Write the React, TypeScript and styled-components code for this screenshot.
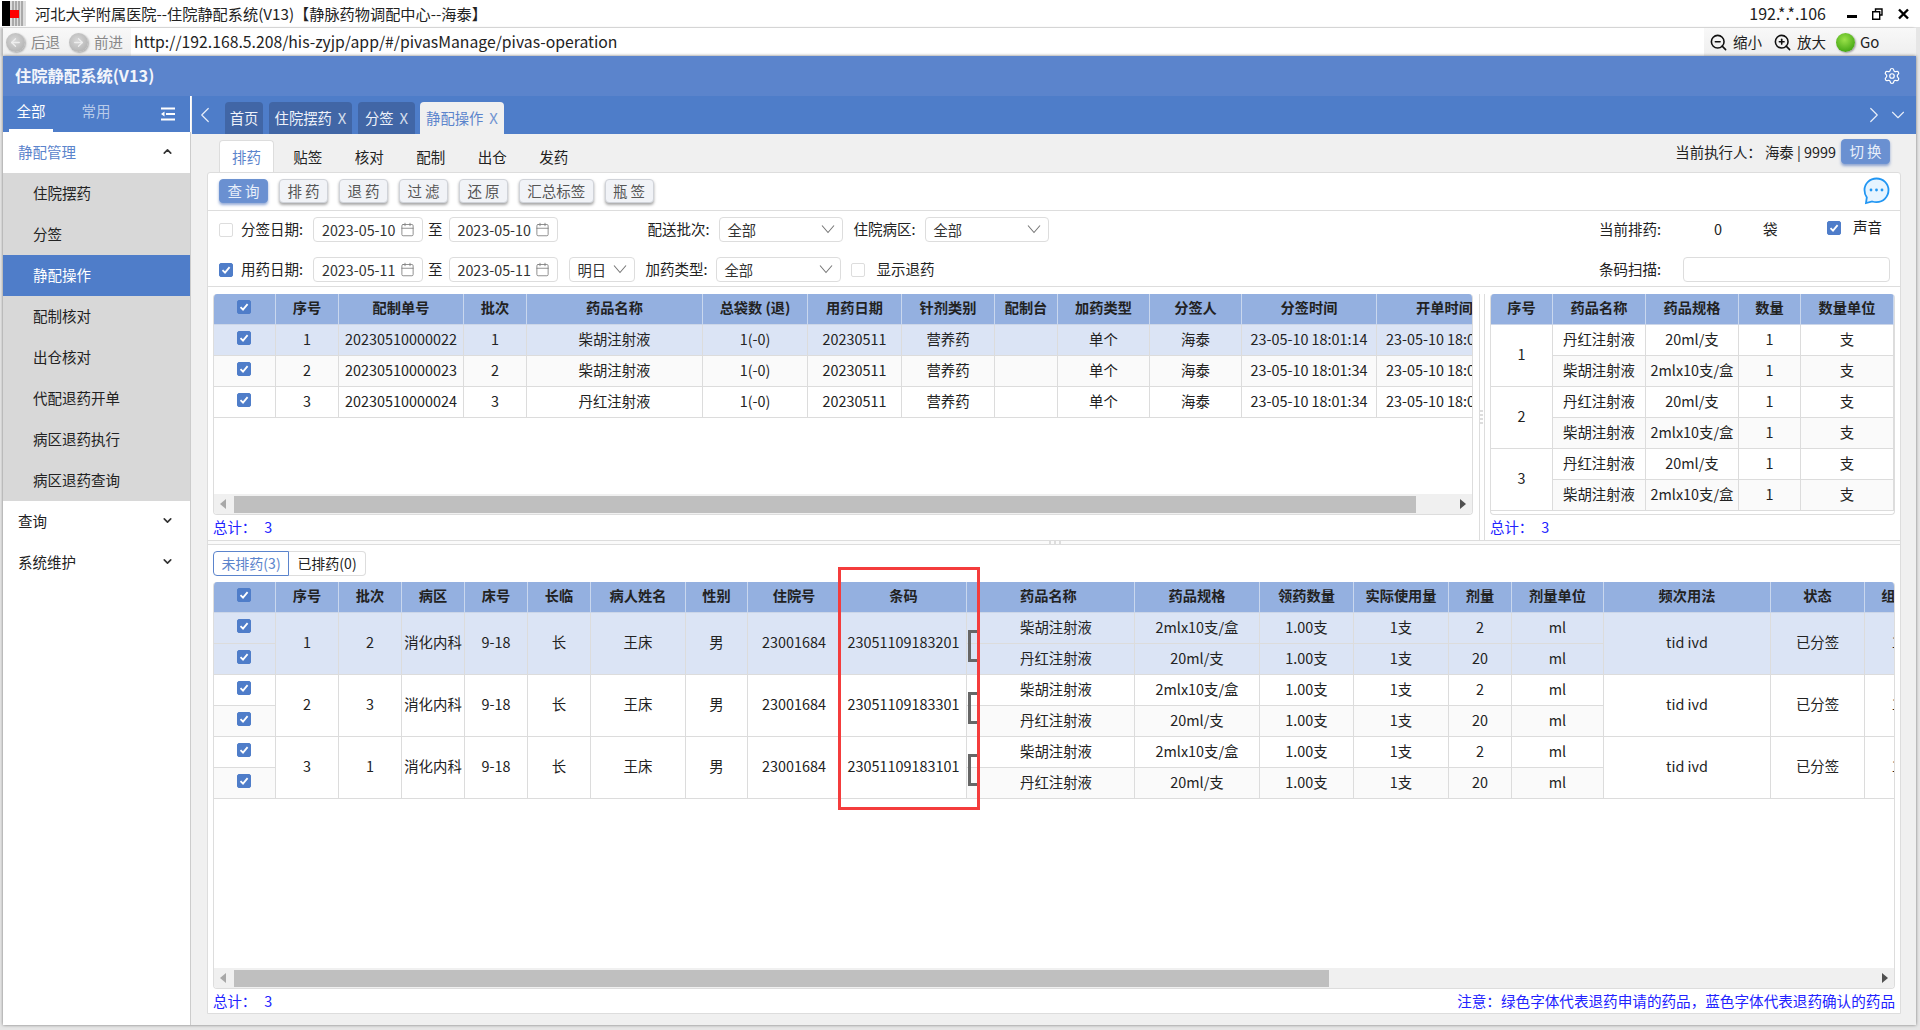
import React from 'react';
import styled, { createGlobalStyle } from 'styled-components';
import { ArrowLeft, ArrowRight, Calendar, ChevronDown, ChevronLeft, ChevronRight, ChevronUp, Settings, ZoomIn, ZoomOut } from 'lucide-react';

const Global = createGlobalStyle`
  html, body { margin: 0; padding: 0; background: #e6e6e6; }
  body { font-family: "Noto Sans CJK SC", "Liberation Sans", sans-serif; font-size: 14px; color: #222; overflow: hidden; }
  * { box-sizing: border-box; }
`;

const Page = styled.div`
  width: 1920px; height: 1030px; display: flex; flex-direction: column; overflow: hidden;
`;
const TitleBar = styled.div`
  height: 28px; flex: none; background: #fff; display: flex; align-items: center; border-bottom: 1px solid #e2e2e2;
  padding: 0 11px 0 2px; font-size: 15.2px; color: #222;
`;
const TitleText = styled.span`margin-left: 9px; white-space: nowrap; padding-bottom: 2px;`;
const TitleIp = styled.span`margin-left: auto; font-size: 16px; margin-right: 21px; padding-bottom: 2px;`;
const WinControls = styled.div`display: flex; align-items: center; gap: 15px;`;
const AddressBar = styled.div`
  height: 28px; flex: none; margin: 0 4px 0 3px; display: flex; align-items: stretch;
  background: linear-gradient(#f8f8f8, #efefef); box-shadow: -2px 0 2px #bbb; font-size: 14.5px;
`;
const NavGroup = styled.div`width: 128px; display: flex; align-items: center; padding-left: 3px; flex: none;`;
const RoundBtn = styled.span`
  width: 19px; height: 19px; border-radius: 50%; display: inline-flex; align-items: center; justify-content: center; flex: none;
  background: radial-gradient(circle at 45% 40%, #d8d8d8, #a9a9a9); box-shadow: 1px 1px 2px #aaa; color: #eee;
`;
const NavLabel = styled.span`color: #888; margin: 0 9px 2px 6px; white-space: nowrap;`;
const UrlBox = styled.div`
  flex: 1; background: #fff; display: flex; align-items: center; padding: 0 0 2px 3px; font-size: 15.75px; color: #222; white-space: nowrap;
`;
const Actions = styled.div`width: 212px; flex: none; display: flex; align-items: center; padding-left: 5px; font-size: 14.5px;`;
const ActionText = styled.span`margin: 0 11px 2px 5px; white-space: nowrap;`;
const GoDot = styled.span`
  width: 19px; height: 19px; border-radius: 50%; flex: none; margin-left: -1px; background: radial-gradient(circle at 45% 35%, #9be24a, #46a815 75%, #2f7d0c);
  box-shadow: 1px 1px 2px #999;
`;
const GoText = styled.span`margin: 0 0 2px 5px; font-size: 15px;`;

const Win = styled.div`
  flex: 1; min-height: 0; margin: 0 4px 5px 3px; display: flex; flex-direction: column; background: #f0f0f0;
  box-shadow: 0 0 3px #777;
`;
const AppHeader = styled.header`
  height: 40px; flex: none; background: #5b84cc; display: flex; align-items: center; justify-content: space-between;
  padding: 0 15px 0 12px; color: #fff;
`;
const AppTitle = styled.div`font-size: 16.3px; font-weight: 700; color: #f2f5fb; padding-bottom: 2px;`;
const Body = styled.div`flex: 1; min-height: 0; display: flex;`;

const Sidebar = styled.aside`
  width: 188px; flex: none; background: #fff; border-right: 1px solid #ccc; display: flex; flex-direction: column;
`;
const SideTabs = styled.div`
  height: 36px; flex: none; background: #4e7dc9; display: flex; align-items: center; position: relative; border-right: 1px solid #fff; margin-right: -1px;
`;
const SideTab = styled.div<{ $active?: boolean }>`
  width: ${p => (p.$active ? '44px' : '60px')}; margin-left: ${p => (p.$active ? '6px' : '13px')}; height: 36px; line-height: 30px; text-align: center;
  font-size: 14.5px; color: ${p => (p.$active ? '#fff' : '#b9cbe9')}; border-bottom: ${p => (p.$active ? '3px solid #fff' : '3px solid transparent')};
`;
const SideMenuIcon = styled.span`margin-left: auto; margin-right: 15px; display: flex;`;
const MenuHead = styled.div<{ $active?: boolean }>`
  height: 41px; flex: none; display: flex; align-items: center; justify-content: space-between; padding: 0 16px 2px 15px; font-size: 14.5px;
  color: ${p => (p.$active ? '#5b84cc' : '#222')};
`;
const MenuItem = styled.div<{ $active?: boolean }>`
  height: 41px; flex: none; display: flex; align-items: center; padding: 0 0 3px 30px; font-size: 14.5px;
  background: ${p => (p.$active ? '#4f7dc9' : '#d8d8d8')}; color: ${p => (p.$active ? '#fff' : '#222')};
`;

const Content = styled.main`flex: 1; min-width: 0; display: flex; flex-direction: column;`;
const TabsBar = styled.div`
  height: 38px; flex: none; background: #4e7dc9; display: flex; align-items: flex-end; color: #fff; margin-left: 1px; padding-right: 7px;
`;
const TabArrow = styled.span<{ $ml?: number; $auto?: boolean }>`
  align-self: center; display: flex; margin-left: ${p => (p.$auto ? 'auto' : `${p.$ml ?? 0}px`)}; color: #e8eef9;
`;
const NavTab = styled.div<{ $active?: boolean; $w: number; $ml?: number }>`
  width: ${p => p.$w}px; height: 32px; margin-left: ${p => p.$ml ?? 6}px; border-radius: 4px 4px 0 0; display: flex; align-items: center; justify-content: center; padding-bottom: 2px;
  font-size: 14.3px; background: ${p => (p.$active ? '#f0f0f0' : '#4166a6')}; color: ${p => (p.$active ? '#5b84cc' : '#eef2fa')}; white-space: nowrap;
`;
const TabX = styled.span`margin-left: 6px; opacity: .85; font-size: 15px;`;
const SubBar = styled.div`
  height: 38px; flex: none; display: flex; align-items: flex-end; padding-left: 28px; padding-right: 26px;
`;
const SubTab = styled.div<{ $active?: boolean }>`
  width: ${p => (p.$active ? '55px' : '61.5px')}; height: 32px; flex: none; display: flex; align-items: center; justify-content: center; font-size: 14.5px; padding-bottom: 1px;
  margin-right: ${p => (p.$active ? '3px' : '0')};
  color: ${p => (p.$active ? '#5b84cc' : '#222')}; background: ${p => (p.$active ? '#fff' : 'transparent')};
  border: ${p => (p.$active ? '1px solid #ddd' : '1px solid transparent')}; border-bottom: 0; border-radius: 4px 4px 0 0;
`;
const Operator = styled.div`margin-left: auto; display: flex; align-items: center; gap: 5px; height: 38px; font-size: 14.4px; padding-bottom: 3px; white-space: pre;`;
const ActionBtn = styled.button<{ $primary?: boolean; $w?: number; $h?: number }>`
  width: ${p => p.$w ?? 49}px; height: ${p => p.$h ?? 24}px; flex: none; padding: 0 0 2px; border-radius: 4px; font-family: inherit; font-size: 14.5px; white-space: pre;
  border: 1px solid ${p => (p.$primary ? '#6d93d2' : '#d0d3d9')};
  background: ${p => (p.$primary ? '#6a90d1' : '#f1f3f7')}; color: ${p => (p.$primary ? '#e8effa' : '#555')};
  box-shadow: 0 2px 3px ${p => (p.$primary ? 'rgba(60,100,180,.55)' : 'rgba(0,0,0,.35)')};
`;
const Panel = styled.section`
  flex: 1; min-height: 0; margin: 0 15px 11px 16px; background: #fff; border: 1px solid #ddd; border-radius: 3px 3px 0 0; display: flex; flex-direction: column;
`;
const Toolbar = styled.div`
  height: 38px; flex: none; border-bottom: 1px solid #ddd; display: flex; align-items: center; gap: 11px; padding: 0 10px 1px 11px;
`;
const BubbleIcon = styled.span`margin-left: auto; display: flex;`;
const Filters = styled.div`
  height: 76px; flex: none; border-bottom: 1px solid #ddd; display: flex; justify-content: space-between; padding: 6px 10px 0 11px;
`;
const FilterCol = styled.div`display: flex; flex-direction: column; gap: 15px;`;
const FilterRow = styled.div`height: 25px; display: flex; align-items: center; font-size: 14.5px; white-space: nowrap;`;
const Label = styled.span<{ $ml?: number; $w?: number }>`
  margin-left: ${p => p.$ml ?? 0}px; ${p => (p.$w ? `width:${p.$w}px;` : '')} flex: none; padding-bottom: 2px;
`;
const Raised = styled.span`display: flex; align-items: center; margin-bottom: 4px;`;
const Box = styled.div<{ $w: number; $ml?: number }>`
  width: ${p => p.$w}px; margin-left: ${p => p.$ml ?? 0}px; height: 25px; flex: none; display: flex; align-items: center; justify-content: space-between;
  border: 1px solid #ddd; border-radius: 4px; padding: 0 7px 1px 8px; background: #fff; font-size: 14.3px; color: #333;
`;
const CheckWrap = styled.span<{ $on?: boolean; $ml?: number }>`
  width: 14px; height: 14px; flex: none; display: flex; align-items: center; justify-content: center; border-radius: 2px;
  margin-left: ${p => p.$ml ?? 0}px;
  background: ${p => (p.$on ? '#4f7dc9' : '#fff')}; border: 1px solid ${p => (p.$on ? '#4f7dc9' : '#ddd')};
`;
const CheckCell = styled.div`display: flex; justify-content: center; align-items: center; padding-right: 2px;`;
const Upper = styled.div`height: 253px; flex: none; display: flex; padding-top: 7px;`;
const LeftPane = styled.div`width: 1272px; flex: none; padding-left: 5px; padding-right: 6px; border-right: 1px solid #ddd; display: flex; flex-direction: column;`;
const RightPane = styled.div`flex: 1; min-width: 0; padding: 0 5px 0 5px; border-left: 1px solid #ddd; margin-left: 4px; display: flex; flex-direction: column; position: relative;`;
const VGrip = styled.span`
  position: absolute; left: -6px; top: 116px; width: 4px; height: 16px;
  background: repeating-linear-gradient(#ddd 0 2px, transparent 2px 4px);
`;
const TableBox = styled.div<{ $h: number }>`
  height: ${p => p.$h}px; flex: none; border: 1px solid #ddd; border-top: 0; border-radius: 4px; overflow: hidden; display: flex; flex-direction: column;
`;
const TableScroll = styled.div`flex: 1; min-height: 0; overflow: hidden;`;
const Grid = styled.table<{ $w: number }>`
  width: ${p => p.$w}px; table-layout: fixed; border-collapse: separate; border-spacing: 0; font-size: 14.4px;
`;
const Th = styled.th<{ $left?: boolean }>`
  height: 31px; padding: 0 0 4px; background: #94b0e0; border-right: 1px solid #c9d7ee; border-bottom: 1px solid #ccd6e8; font-weight: 700; color: #222; font-size: 14.2px;
  white-space: nowrap; overflow: hidden;
  text-align: ${p => (p.$left ? 'left' : 'center')}; padding-left: ${p => (p.$left ? '53px' : '0')};
`;
const Td = styled.td<{ $bg?: string; $left?: boolean }>`
  height: 31px; padding: 0 0 4px; background: ${p => p.$bg ?? '#fff'}; border-right: 1px solid #dcdcdc; border-bottom: 1px solid #dcdcdc; color: #222;
  text-align: ${p => (p.$left ? 'left' : 'center')}; padding-left: ${p => (p.$left ? '53px' : '0')}; white-space: nowrap; overflow: hidden;
`;
const DrugTd = styled(Td)`position: relative; overflow: visible;`;
const Bracket = styled.span`
  position: absolute; left: 1px; top: 17px; width: 11px; height: 32px; border: 3px solid #666; border-right: 0; z-index: 1;
`;
const HScroll = styled.div`height: 20px; flex: none; background: #f0f0f0; display: flex; align-items: center; position: relative; justify-content: space-between; padding: 0 6px;`;
const Thumb = styled.div<{ $w: number }>`position: absolute; left: 20px; top: 2px; width: ${p => p.$w}px; height: 17px; background: #bfbfbf;`;
const Tri = styled.span<{ $dir: 'l' | 'r' }>`
  width: 0; height: 0; border-top: 5px solid transparent; border-bottom: 5px solid transparent;
  ${p => (p.$dir === 'l' ? 'border-right: 6px solid #a8a8a8;' : 'border-left: 6px solid #505050;')}
`;
const Total = styled.div`height: 25px; flex: none; display: flex; align-items: center; color: #2222ff; font-size: 14.4px; gap: 8px; white-space: nowrap; padding-bottom: 2px;`;
const HSplit = styled.div`
  height: 5px; flex: none; border-top: 1px solid #ddd; border-bottom: 1px solid #ddd; background: #fafafa; position: relative;
`;
const HGrip = styled.span`
  position: absolute; left: 841px; top: 0; width: 14px; height: 3px;
  background: repeating-linear-gradient(90deg, #ddd 0 2px, transparent 2px 5px);
`;
const Lower = styled.div`flex: 1; min-height: 0; padding: 6px 5px 0; display: flex; flex-direction: column; position: relative;`;
const PillRow = styled.div`height: 25px; flex: none; display: flex; margin-bottom: 6px;`;
const Pill = styled.div<{ $active?: boolean }>`
  width: ${p => (p.$active ? '76px' : '77px')}; display: flex; align-items: center; justify-content: center; font-size: 14px; padding-bottom: 1px;
  color: ${p => (p.$active ? '#5b84cc' : '#222')}; border: 1px solid ${p => (p.$active ? '#5b84cc' : '#ddd')};
  ${p => (p.$active ? 'border-radius: 4px 0 0 4px;' : 'border-radius: 0 4px 4px 0; border-left: 0;')}
`;
const Footer = styled.div`height: 25px; flex: none; display: flex; justify-content: space-between; align-items: center; color: #2222ff;`;
const Note = styled.span`font-size: 14.6px; padding-bottom: 2px; white-space: nowrap;`;
const RedFrame = styled.div`
  position: absolute; left: 630px; top: 22px; width: 142px; height: 243px; border: 3px solid #f43c3c; z-index: 3; pointer-events: none;
`;

const Check = ({ on, ml }: { on?: boolean; ml?: number }) => (
  <CheckWrap $on={on} $ml={ml}>
    {on && (
      <svg width="12" height="12" viewBox="0 0 12 12"><path d="M2.5 6.2 5 8.7 9.6 3.2" fill="none" stroke="#fff" strokeWidth="1.8" /></svg>
    )}
  </CheckWrap>
);
const CellCheck = () => <CheckCell><Check on /></CheckCell>;
const SelectChevron = () => (
  <svg width="14" height="14" viewBox="0 0 14 14"><path d="M1 3.500 7 10.500 13 3.500" fill="none" stroke="#777" strokeWidth="1.1" /></svg>
);
const DateBox = ({ v, w, ml }: { v: string; w: number; ml?: number }) => (
  <Box $w={w} $ml={ml}>{v}<Calendar size={15} strokeWidth={1.3} color="#777" /></Box>
);
const Select = ({ v, w, ml }: { v: string; w: number; ml?: number }) => (
  <Box $w={w} $ml={ml}>{v}<SelectChevron /></Box>
);

const upperCols = [62, 63, 125, 63, 176, 105, 94, 93, 63, 92, 92, 135, 136];
const upperHead = ['', '序号', '配制单号', '批次', '药品名称', '总袋数 (退)', '用药日期', '针剂类别', '配制台', '加药类型', '分签人', '分签时间', '开单时间'];
const upperRows = [
  ['1', '20230510000022', '1', '柴胡注射液', '23-05-10 18:01:14', '#dbe4f5'],
  ['2', '20230510000023', '2', '柴胡注射液', '23-05-10 18:01:34', '#fafafa'],
  ['3', '20230510000024', '3', '丹红注射液', '23-05-10 18:01:34', '#fff'],
];
const sideCols = [62, 93, 93, 62, 93];
const lowerCols = [62, 63, 63, 63, 63, 63, 95, 62, 93, 126, 168, 125, 94, 95, 63, 92, 167, 94, 62];
const lowerHead = ['序号', '批次', '病区', '床号', '长临', '病人姓名', '性别', '住院号', '条码'];
const lowerRows = [
  { n: '1', b: '2', code: '23051109183201', sel: true },
  { n: '2', b: '3', code: '23051109183301', sel: false },
  { n: '3', b: '1', code: '23051109183101', sel: false },
];
const drugs = [
  ['柴胡注射液', '2mlx10支/盒', '2'],
  ['丹红注射液', '20ml/支', '20'],
];

export default function App() {
  return (
    <Page>
      <Global />
      <TitleBar>
        <svg width="24" height="25" viewBox="0 0 24 25">
          <rect width="8" height="25" fill="#000" />
          <rect x="8" width="16" height="25" fill="#ddd" />
          <path d="M11 0v25M14 0v25M17 0v25M20 0v25" stroke="#888" strokeWidth="1.2" />
          <rect x="8" y="9" width="9" height="8" fill="#f00" />
        </svg>
        <TitleText>河北大学附属医院--住院静配系统(V13)【静脉药物调配中心--海泰】</TitleText>
        <TitleIp>192.*.*.106</TitleIp>
        <WinControls>
          <svg width="10" height="12" viewBox="0 0 10 12"><rect y="7" width="10" height="3" fill="#000" /></svg>
          <svg width="11" height="12" viewBox="0 0 11 12"><path d="M3.5 3V1h6.5v6H8M.7 3.7h7v7.5h-7z" fill="none" stroke="#000" strokeWidth="1.4" /></svg>
          <svg width="11" height="12" viewBox="0 0 11 12"><path d="M1 1.5 10 10.5M10 1.5 1 10.5" stroke="#000" strokeWidth="2.4" /></svg>
        </WinControls>
      </TitleBar>
      <AddressBar>
        <NavGroup>
          <RoundBtn><ArrowLeft size={13} strokeWidth={2.4} /></RoundBtn><NavLabel>后退</NavLabel>
          <RoundBtn><ArrowRight size={13} strokeWidth={2.4} /></RoundBtn><NavLabel>前进</NavLabel>
        </NavGroup>
        <UrlBox>http://192.168.5.208/his-zyjp/app/#/pivasManage/pivas-operation</UrlBox>
        <Actions>
          <ZoomOut size={19} strokeWidth={2} color="#111" /><ActionText>缩小</ActionText>
          <ZoomIn size={19} strokeWidth={2} color="#111" /><ActionText>放大</ActionText>
          <GoDot /><GoText>Go</GoText>
        </Actions>
      </AddressBar>
      <Win>
        <AppHeader>
          <AppTitle>住院静配系统(V13)</AppTitle>
          <Settings size={18} strokeWidth={1.6} color="#fff" />
        </AppHeader>
        <Body>
          <Sidebar>
            <SideTabs>
              <SideTab $active>全部</SideTab>
              <SideTab>常用</SideTab>
              <SideMenuIcon>
                <svg width="14" height="14" viewBox="0 0 14 14"><path d="M0 1.5h14M5 7h9M0 12.500h14" stroke="#fff" strokeWidth="2" /><path d="M0 7 3.500 4.500v5z" fill="#fff" /></svg>
              </SideMenuIcon>
            </SideTabs>
            <MenuHead $active>静配管理<ChevronUp size={13} strokeWidth={3} color="#333" /></MenuHead>
            <MenuItem>住院摆药</MenuItem>
            <MenuItem>分签</MenuItem>
            <MenuItem $active>静配操作</MenuItem>
            <MenuItem>配制核对</MenuItem>
            <MenuItem>出仓核对</MenuItem>
            <MenuItem>代配退药开单</MenuItem>
            <MenuItem>病区退药执行</MenuItem>
            <MenuItem>病区退药查询</MenuItem>
            <MenuHead>查询<ChevronDown size={13} strokeWidth={3} color="#333" /></MenuHead>
            <MenuHead>系统维护<ChevronDown size={13} strokeWidth={3} color="#333" /></MenuHead>
          </Sidebar>
          <Content>
            <TabsBar>
              <TabArrow><ChevronLeft size={26} strokeWidth={1.1} /></TabArrow>
              <NavTab $w={38} $ml={7}>首页</NavTab>
              <NavTab $w={83}>住院摆药<TabX>X</TabX></NavTab>
              <NavTab $w={57}>分签<TabX>X</TabX></NavTab>
              <NavTab $w={84} $active $ml={5}>静配操作<TabX>X</TabX></NavTab>
              <TabArrow $auto><ChevronRight size={26} strokeWidth={1.1} /></TabArrow>
              <TabArrow><ChevronDown size={22} strokeWidth={1.2} /></TabArrow>
            </TabsBar>
            <SubBar>
              <SubTab $active>排药</SubTab>
              <SubTab>贴签</SubTab>
              <SubTab>核对</SubTab>
              <SubTab>配制</SubTab>
              <SubTab>出仓</SubTab>
              <SubTab>发药</SubTab>
              <Operator>
                当前执行人： 海泰 | 9999
                <ActionBtn $primary $h={25}>切 换</ActionBtn>
              </Operator>
            </SubBar>
            <Panel>
              <Toolbar>
                <ActionBtn $primary>查 询</ActionBtn>
                <ActionBtn>排 药</ActionBtn>
                <ActionBtn>退 药</ActionBtn>
                <ActionBtn>过 滤</ActionBtn>
                <ActionBtn>还 原</ActionBtn>
                <ActionBtn $w={74.500}>汇总标签</ActionBtn>
                <ActionBtn>瓶 签</ActionBtn>
                <BubbleIcon>
                  <svg width="27" height="28" viewBox="0 0 27 28">
                    <path d="M13.500 1.500C6.700 1.500 1.500 6.600 1.500 13c0 3 .8 5.600 2.300 7.400L3 26l6.200-1.500c1.400.4 2.800.6 4.300.6 6.800 0 12-5.400 12-12S20.300 1.500 13.500 1.500z" fill="#e6f4ff" stroke="#2196f3" strokeWidth="1.800" />
                    <circle cx="8" cy="13" r="1.400" fill="#2196f3" /><circle cx="13.500" cy="13" r="1.400" fill="#2196f3" /><circle cx="19" cy="13" r="1.400" fill="#2196f3" />
                  </svg>
                </BubbleIcon>
              </Toolbar>
              <Filters>
                <FilterCol>
                  <FilterRow>
                    <Check />
                    <Label $ml={8} $w={72}>分签日期:</Label>
                    <DateBox v="2023-05-10" w={110} />
                    <Label $ml={5}>至</Label>
                    <DateBox v="2023-05-10" w={109} ml={6} />
                    <Label $ml={90}>配送批次:</Label>
                    <Select v="全部" w={124} ml={9} />
                    <Label $ml={11}>住院病区:</Label>
                    <Select v="全部" w={124} ml={9} />
                  </FilterRow>
                  <FilterRow>
                    <Check on />
                    <Label $ml={8} $w={72}>用药日期:</Label>
                    <DateBox v="2023-05-11" w={110} />
                    <Label $ml={5}>至</Label>
                    <DateBox v="2023-05-11" w={109} ml={6} />
                    <Select v="明日" w={66} ml={11} />
                    <Label $ml={11}>加药类型:</Label>
                    <Select v="全部" w={125} ml={8} />
                    <Check ml={10} />
                    <Label $ml={12}>显示退药</Label>
                  </FilterRow>
                </FilterCol>
                <FilterCol>
                  <FilterRow>
                    <Label $w={115}>当前排药:</Label>
                    <Label $w={49}>0</Label>
                    <Label $w={64}>袋</Label>
                    <Raised>
                      <Check on />
                      <Label $ml={12}>声音</Label>
                    </Raised>
                  </FilterRow>
                  <FilterRow>
                    <Label $w={84}>条码扫描:</Label>
                    <Box $w={207} />
                  </FilterRow>
                </FilterCol>
              </Filters>
              <Upper>
                <LeftPane>
                  <TableBox $h={221}>
                    <TableScroll>
                      <Grid $w={1299}>
                        <colgroup>{upperCols.map((w, i) => <col key={i} width={w} />)}</colgroup>
                        <thead>
                          <tr>
                            {upperHead.map((h, i) => <Th key={i}>{i === 0 ? <CellCheck /> : h}</Th>)}
                          </tr>
                        </thead>
                        <tbody>
                          {upperRows.map(r => (
                            <tr key={r[0]}>
                              <Td $bg={r[5]}><CellCheck /></Td>
                              <Td $bg={r[5]}>{r[0]}</Td>
                              <Td $bg={r[5]}>{r[1]}</Td>
                              <Td $bg={r[5]}>{r[2]}</Td>
                              <Td $bg={r[5]}>{r[3]}</Td>
                              <Td $bg={r[5]}>1(-0)</Td>
                              <Td $bg={r[5]}>20230511</Td>
                              <Td $bg={r[5]}>营养药</Td>
                              <Td $bg={r[5]} />
                              <Td $bg={r[5]}>单个</Td>
                              <Td $bg={r[5]}>海泰</Td>
                              <Td $bg={r[5]}>{r[4]}</Td>
                              <Td $bg={r[5]}>{r[4]}</Td>
                            </tr>
                          ))}
                        </tbody>
                      </Grid>
                    </TableScroll>
                    <HScroll><Tri $dir="l" /><Thumb $w={1182} /><Tri $dir="r" /></HScroll>
                  </TableBox>
                  <Total>总计：<span>3</span></Total>
                </LeftPane>
                <RightPane>
                  <VGrip />
                  <TableBox $h={221}>
                    <TableScroll>
                      <Grid $w={403}>
                        <colgroup>{sideCols.map((w, i) => <col key={i} width={w} />)}</colgroup>
                        <thead>
                          <tr>{['序号', '药品名称', '药品规格', '数量', '数量单位'].map(h => <Th key={h}>{h}</Th>)}</tr>
                        </thead>
                        <tbody>
                          {['1', '2', '3'].map(n => (
                            <React.Fragment key={n}>
                              <tr>
                                <Td rowSpan={2}>{n}</Td>
                                <Td>丹红注射液</Td><Td>20ml/支</Td><Td>1</Td><Td>支</Td>
                              </tr>
                              <tr>
                                <Td $bg="#fafafa">柴胡注射液</Td><Td $bg="#fafafa">2mlx10支/盒</Td><Td $bg="#fafafa">1</Td><Td $bg="#fafafa">支</Td>
                              </tr>
                            </React.Fragment>
                          ))}
                        </tbody>
                      </Grid>
                    </TableScroll>
                  </TableBox>
                  <Total>总计：<span>3</span></Total>
                </RightPane>
              </Upper>
              <HSplit><HGrip /></HSplit>
              <Lower>
                <RedFrame />
                <PillRow>
                  <Pill $active>未排药(3)</Pill>
                  <Pill>已排药(0)</Pill>
                </PillRow>
                <TableBox $h={407}>
                  <TableScroll>
                    <Grid $w={1713}>
                      <colgroup>{lowerCols.map((w, i) => <col key={i} width={w} />)}</colgroup>
                      <thead>
                        <tr>
                          <Th><CellCheck /></Th>
                          {lowerHead.map(h => <Th key={h}>{h}</Th>)}
                          <Th $left>药品名称</Th>
                          {['药品规格', '领药数量', '实际使用量', '剂量', '剂量单位', '频次用法', '状态', '组号'].map(h => <Th key={h}>{h}</Th>)}
                        </tr>
                      </thead>
                      <tbody>
                        {lowerRows.map(g => {
                          const base = g.sel ? '#dbe4f5' : '#fff';
                          return (
                            <React.Fragment key={g.n}>
                              {drugs.map((d, i) => {
                                const bg = g.sel ? '#dbe4f5' : i === 1 ? '#fafafa' : '#fff';
                                return (
                                  <tr key={d[0]}>
                                    <Td $bg={bg}><CellCheck /></Td>
                                    {i === 0 && (
                                      <>
                                        <Td rowSpan={2} $bg={base}>{g.n}</Td>
                                        <Td rowSpan={2} $bg={base}>{g.b}</Td>
                                        <Td rowSpan={2} $bg={base}>消化内科</Td>
                                        <Td rowSpan={2} $bg={base}>9-18</Td>
                                        <Td rowSpan={2} $bg={base}>长</Td>
                                        <Td rowSpan={2} $bg={base}>王床</Td>
                                        <Td rowSpan={2} $bg={base}>男</Td>
                                        <Td rowSpan={2} $bg={base}>23001684</Td>
                                        <Td rowSpan={2} $bg={base}>{g.code}</Td>
                                      </>
                                    )}
                                    <DrugTd $bg={bg} $left>{i === 0 && <Bracket />}{d[0]}</DrugTd>
                                    <Td $bg={bg}>{d[1]}</Td>
                                    <Td $bg={bg}>1.00支</Td>
                                    <Td $bg={bg}>1支</Td>
                                    <Td $bg={bg}>{d[2]}</Td>
                                    <Td $bg={bg}>ml</Td>
                                    {i === 0 && (
                                      <>
                                        <Td rowSpan={2} $bg={base}>tid ivd</Td>
                                        <Td rowSpan={2} $bg={base}>已分签</Td>
                                        <Td rowSpan={2} $bg={base}>1</Td>
                                      </>
                                    )}
                                  </tr>
                                );
                              })}
                            </React.Fragment>
                          );
                        })}
                      </tbody>
                    </Grid>
                  </TableScroll>
                  <HScroll><Tri $dir="l" /><Thumb $w={1095} /><Tri $dir="r" /></HScroll>
                </TableBox>
                <Footer>
                  <Total>总计：<span>3</span></Total>
                  <Note>注意：绿色字体代表退药申请的药品，蓝色字体代表退药确认的药品</Note>
                </Footer>
              </Lower>
            </Panel>
          </Content>
        </Body>
      </Win>
    </Page>
  );
}
